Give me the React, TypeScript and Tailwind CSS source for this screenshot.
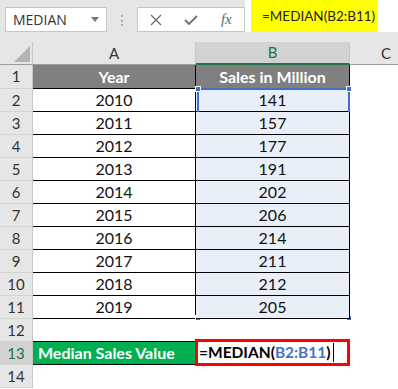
import React from "react";

const data = [
  { year: 2010, sales: 141 },
  { year: 2011, sales: 157 },
  { year: 2012, sales: 177 },
  { year: 2013, sales: 191 },
  { year: 2014, sales: 202 },
  { year: 2015, sales: 206 },
  { year: 2016, sales: 214 },
  { year: 2017, sales: 211 },
  { year: 2018, sales: 212 },
  { year: 2019, sales: 205 },
];

function RowHead({ n, active }: { n: number; active?: boolean }) {
  return (
    <div
      className={`flex items-center justify-center border-r border-b border-r-[#c6c6c6] border-b-[#d4d4d4] text-[15px] ${
        active ? "bg-[#d2d2d2] text-[#217346]" : "bg-[#e6e6e6] text-[#333]"
      }`}
    >
      {n}
    </div>
  );
}

export default function App() {
  return (
    <div className="w-[398px] h-[389px] overflow-hidden bg-white font-['Lato',sans-serif]">
      {/* Formula bar */}
      <div className="flex h-[42px] bg-[#e6e6e6]">
        <div className="ml-[5px] mt-[7px] flex h-[25px] w-[102px] items-center justify-between border border-[#c6c6c6] bg-white pl-[7px] pr-[7px] font-['Open_Sans',sans-serif] text-[14px] text-[#333]">
          MEDIAN
          <svg width="8" height="5" viewBox="0 0 8 5">
            <path d="M0 0h8L4 5z" fill="#777" />
          </svg>
        </div>
        <div className="ml-[14px] mt-[15px] flex h-[11px] flex-col justify-between">
          <span className="h-[2px] w-[2px] bg-[#b0b0b0]" />
          <span className="h-[2px] w-[2px] bg-[#b0b0b0]" />
          <span className="h-[2px] w-[2px] bg-[#b0b0b0]" />
        </div>
        <div className="ml-[14px] mt-[7px] flex h-[25px] w-[108px] items-center border border-[#c6c6c6] bg-white">
          <div className="flex w-[36px] justify-center">
            <svg width="12" height="12" viewBox="0 0 12 12">
              <path d="M1 1l10 10M11 1L1 11" stroke="#6e6e6e" strokeWidth="1.4" />
            </svg>
          </div>
          <div className="flex w-[36px] justify-center">
            <svg width="14" height="10" viewBox="0 0 14 10">
              <path d="M1 5l4 4 8-8" stroke="#6e6e6e" strokeWidth="1.8" fill="none" />
            </svg>
          </div>
          <div className="flex w-[36px] justify-center font-['Liberation_Serif',serif] text-[15px] italic text-[#666]">
            fx
          </div>
        </div>
        <div className="flex h-[32px] flex-1 bg-white pl-[6px]">
          <div className="flex w-[126px] items-center bg-[#ffff00] pl-[11px] text-[13.5px] text-[#222]">
            =MEDIAN(B2:B11)
          </div>
        </div>
      </div>

      {/* Sheet */}
      <div className="grid w-[422px] grid-cols-[33px_163px_154px_72px] grid-rows-[23px_24px_repeat(13,23px)]">
        {/* column headers */}
        <div className="flex items-end justify-end border-r border-b border-r-[#c6c6c6] border-b-[#9b9b9b] bg-[#e6e6e6] p-[2px]">
          <svg width="16" height="16" viewBox="0 0 16 16">
            <path d="M16 0v16H0z" fill="#b4b4b4" />
          </svg>
        </div>
        <div className="flex items-center justify-center border-r border-b border-r-[#c6c6c6] border-b-[#9b9b9b] bg-[#e6e6e6] text-[15px] text-[#333]">
          A
        </div>
        <div className="flex items-center justify-center border-r border-b-2 border-r-[#c6c6c6] border-b-[#217346] bg-[#d2d2d2] text-[15px] text-[#217346]">
          B
        </div>
        <div className="flex items-center justify-center border-b border-b-[#9b9b9b] bg-[#e6e6e6] text-[15px] text-[#333]">
          C
        </div>

        {/* row 1 */}
        <RowHead n={1} />
        <div className="flex items-center justify-center border-r border-b border-black bg-[#808080] text-[16px] font-bold text-white">
          Year
        </div>
        <div className="flex items-center justify-center border-r border-b border-black bg-[#808080] text-[16px] font-bold text-white">
          Sales in Million
        </div>
        <div />

        {data.map((d, i) => (
          <React.Fragment key={d.year}>
            <RowHead n={i + 2} />
            <div className="flex items-center justify-center border-r border-b border-black text-[16px] text-[#111]">
              {d.year}
            </div>
            <div className="relative flex items-center justify-center border-r border-b border-black bg-[#e8eff9] text-[16px] text-[#111]">
              {d.sales}
              {i === 0 && (
                // range reference outline over B2:B11
                <div className="absolute left-px -top-px h-[231px] w-[153px] border-2 border-[#3f6fc6]">
                  <span className="absolute -left-[4px] -top-[4px] h-[6px] w-[6px] border border-white bg-[#3f6fc6]" />
                  <span className="absolute -right-[4px] -top-[4px] h-[6px] w-[6px] border border-white bg-[#3f6fc6]" />
                  <span className="absolute -left-[4px] -bottom-[4px] h-[6px] w-[6px] border border-white bg-[#3f6fc6]" />
                  <span className="absolute -right-[4px] -bottom-[4px] h-[6px] w-[6px] border border-white bg-[#3f6fc6]" />
                </div>
              )}
            </div>
            <div />
          </React.Fragment>
        ))}

        {/* row 12 */}
        <RowHead n={12} />
        <div className="border-b border-black" />
        <div className="border-b border-black" />
        <div />

        {/* row 13 */}
        <RowHead n={13} active />
        <div className="flex items-center border-r border-b border-black bg-[#00b050] pl-[5px] text-[16px] font-bold text-white">
          Median Sales Value
        </div>
        <div>
          <div className="-ml-px -mt-[3px] flex h-[27px] w-[155px] items-center border-[3px] border-[#ff0000] bg-white pl-[1px] text-[15.5px] font-bold text-black">
            =MEDIAN(<span className="text-[#4472c4]">B2:B11</span>)
            <span className="ml-[2px] h-[19px] w-px bg-black" />
          </div>
        </div>
        <div />

        {/* row 14 */}
        <RowHead n={14} />
        <div />
        <div />
        <div />
      </div>
    </div>
  );
}
